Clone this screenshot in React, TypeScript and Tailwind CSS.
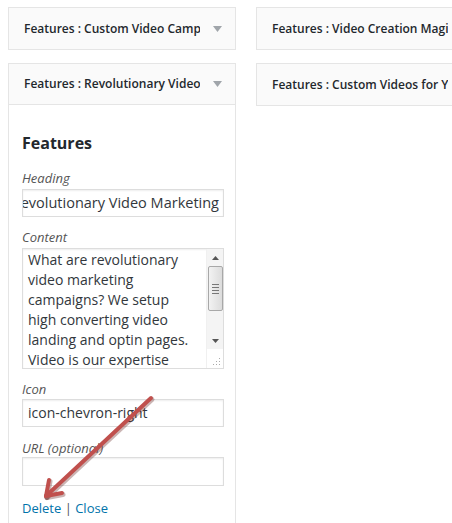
import React from "react";

const font = { fontFamily: '"Open Sans", "Liberation Sans", sans-serif' };

const Caret = () => (
  <svg width="9" height="6" viewBox="0 0 9 6" className="shrink-0">
    <path d="M0 0 H9 L4.5 6 Z" fill="#a0a5aa" />
  </svg>
);

const WidgetHeader = ({ title, open }: { title: string; open?: boolean }) => (
  <div
    className={`flex items-center h-[41px] pl-[15px] pr-[4px] bg-[#fafafa] ${open ? "border-b border-[#e5e5e5]" : ""}`}
  >
    <span className="w-[176px] mr-[3px] overflow-hidden whitespace-nowrap text-[12px] font-semibold text-[#23282d]">
      {title}
    </span>
    <span className="flex-1 flex justify-center">
      <Caret />
    </span>
  </div>
);

const Label = ({ children, className = "" }: { children: React.ReactNode; className?: string }) => (
  <div className={`text-[13px] leading-[18px] italic text-[#555] ${className}`}>{children}</div>
);

const boxed = "w-[202px] border border-[#ddd] bg-white shadow-[inset_0_1px_2px_rgba(0,0,0,0.07)]";

const Scrollbar = () => (
  <div className="w-[17px] h-full flex flex-col items-center bg-[#f4f4f4] border-l border-[#f0f0f0]">
    <div className="h-[17px] flex items-center justify-center">
      <svg width="7" height="4" viewBox="0 0 7 4">
        <path d="M0 4 L3.5 0 L7 4 Z" fill="#555" />
      </svg>
    </div>
    <div className="w-[15px] h-[45px] rounded-[2px] border border-[#a8a8a8] bg-gradient-to-r from-[#f2f2f2] to-[#dcdcdc] flex flex-col items-center justify-center gap-[2px]">
      <div className="w-[7px] h-px bg-[#777]" />
      <div className="w-[7px] h-px bg-[#777]" />
      <div className="w-[7px] h-px bg-[#777]" />
      <div className="w-[7px] h-px bg-[#777]" />
    </div>
    <div className="flex-1" />
    <div className="h-[17px] flex items-center justify-center">
      <svg width="7" height="4" viewBox="0 0 7 4">
        <path d="M0 0 L7 0 L3.5 4 Z" fill="#555" />
      </svg>
    </div>
    <div className="h-[19px] w-full flex items-end justify-end pr-[2px] pb-[2px] bg-white">
      <svg width="8" height="8" viewBox="0 0 8 8">
        <g fill="#aaa">
          <rect x="6" y="0" width="1" height="1" />
          <rect x="3" y="3" width="1" height="1" />
          <rect x="6" y="3" width="1" height="1" />
          <rect x="0" y="6" width="1" height="1" />
          <rect x="3" y="6" width="1" height="1" />
          <rect x="6" y="6" width="1" height="1" />
        </g>
      </svg>
    </div>
  </div>
);

const Textarea = () => (
  <div className={`mt-[2px] h-[121px] flex overflow-hidden ${boxed}`}>
    <div className="flex-1 pl-[5px] pt-[1px] text-[14px] leading-[20px] text-[#32373c]">
      What are revolutionary
      <br />
      video marketing
      <br />
      campaigns? We setup
      <br />
      high converting video
      <br />
      landing and optin pages.
      <br />
      Video is our expertise
    </div>
    <Scrollbar />
  </div>
);

const RedArrow = () => (
  <svg className="absolute left-0 top-0 pointer-events-none" width="452" height="523">
    <g stroke="#6b2a28" strokeOpacity="0.35" strokeWidth="5" strokeLinecap="round" fill="none" transform="translate(1,1.5)">
      <path d="M151 398 L46 496" />
      <path d="M46 496 L49 480" />
      <path d="M46 496 L62 493" />
    </g>
    <g stroke="#c0504d" strokeWidth="4" strokeLinecap="round" fill="none">
      <path d="M151 398 L46 496" />
      <path d="M46 496 L49 480" />
      <path d="M46 496 L62 493" />
    </g>
  </svg>
);

export default function App() {
  return (
    <div className="relative w-[452px] h-[523px] overflow-hidden bg-white" style={font}>
      <div className="flex gap-[20px] pl-[8px] pt-[7px]">
        <div className="w-[228px] flex flex-col gap-[13px] shrink-0">
          <div className="border border-[#e5e5e5]">
            <WidgetHeader title="Features : Custom Video Campaigns" />
          </div>
          <div className="border border-[#e5e5e5] border-b-0 h-[470px]">
            <WidgetHeader title="Features : Revolutionary Video Marketing" open />
            <div className="pl-[13px] pt-[27px]">
              <div className="text-[16px] leading-[22px] font-bold text-[#23282d]">Features</div>
              <Label className="mt-[15px]">Heading</Label>
              <div className={`mt-[2px] h-[28px] overflow-hidden whitespace-nowrap text-[14.5px] leading-[26px] text-[#32373c] flex justify-end pr-[4px] ${boxed}`}>
                <span>Revolutionary Video Marketing</span>
              </div>
              <Label className="mt-[11px]">Content</Label>
              <Textarea />
              <Label className="mt-[11px]">Icon</Label>
              <div className={`mt-[1px] h-[28px] text-[14px] leading-[26px] text-[#32373c] pl-[5px] ${boxed}`}>
                icon-chevron-right
              </div>
              <Label className="mt-[12px]">URL (optional)</Label>
              <div className={`h-[29px] ${boxed}`} />
              <div className="mt-[13px] text-[13px] leading-[18px] text-[#555]">
                <a className="text-[#0073aa]">Delete</a> | <a className="text-[#0073aa]">Close</a>
              </div>
            </div>
          </div>
        </div>
        <div className="w-[228px] flex flex-col gap-[13px] shrink-0">
          <div className="border border-[#e5e5e5]">
            <WidgetHeader title="Features : Video Creation Magic" />
          </div>
          <div className="border border-[#e5e5e5]">
            <WidgetHeader title="Features : Custom Videos for You" />
          </div>
        </div>
      </div>
      <RedArrow />
    </div>
  );
}
